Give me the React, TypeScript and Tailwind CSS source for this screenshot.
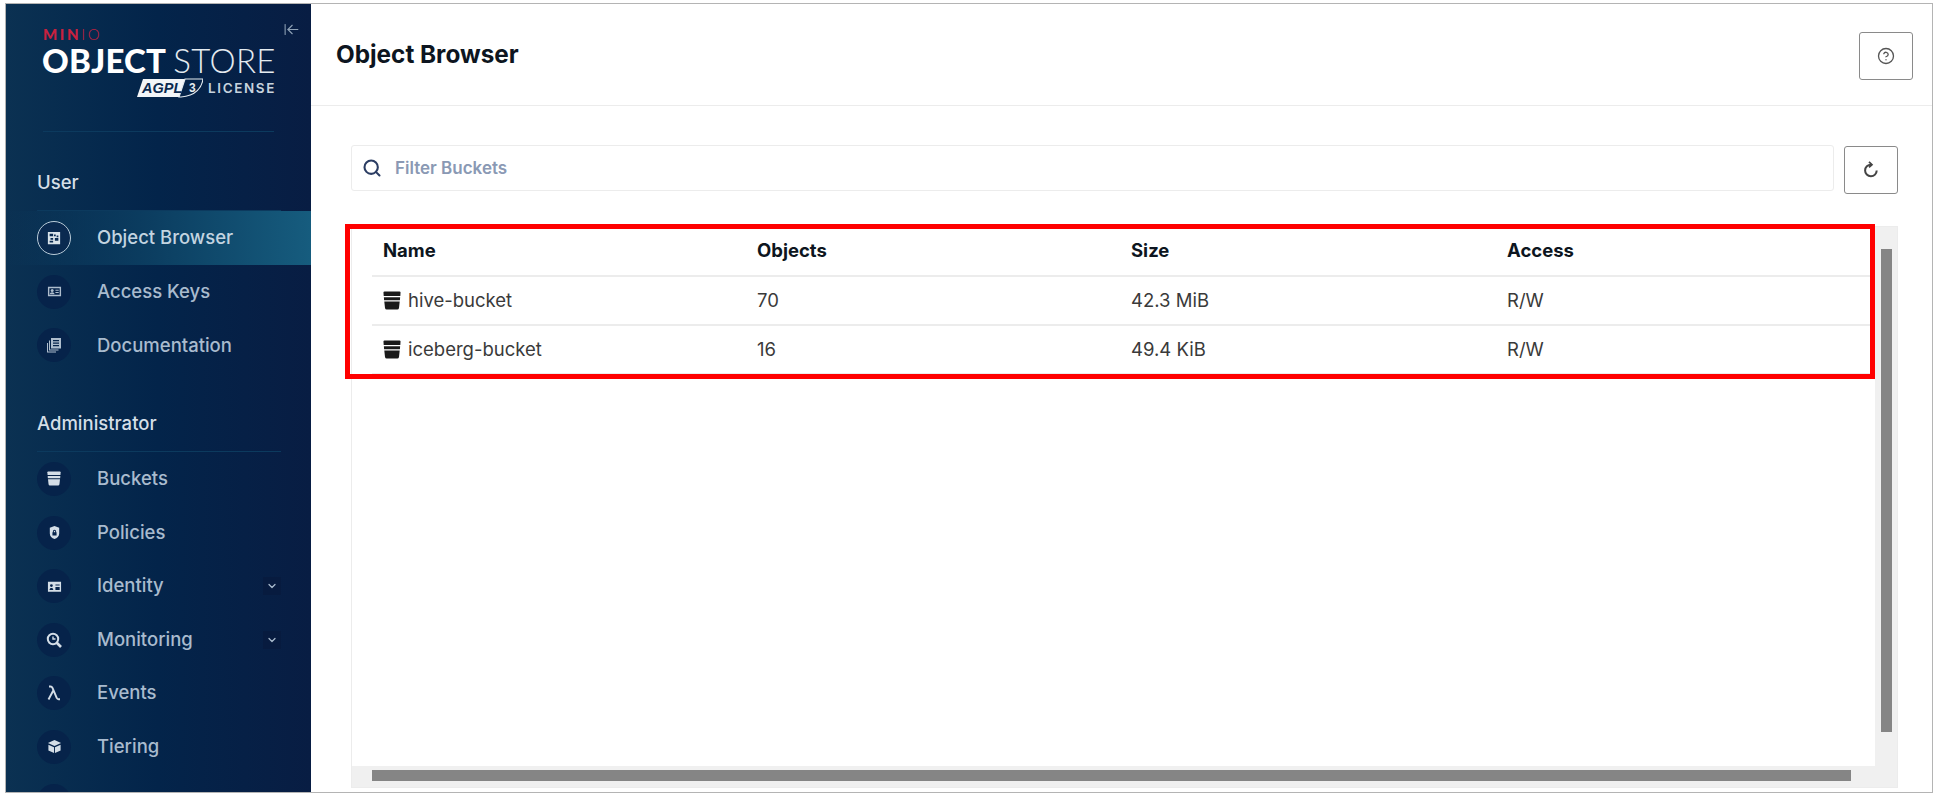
import React from "react";
import { ArrowLeftToLine, ChevronDown, CircleHelp, Search } from "lucide-react";

function BucketIcon({ className }: { className: string }) {
  return (
    <svg viewBox="0 0 18 19" className={className} fill="currentColor">
      <path d="M1.500 0.500h15A1 1 0 0 1 17.500 1.500L17.300 5H.700L.500 1.500A1 1 0 0 1 1.500 0.500z" />
      <path d="M.900 6.200h16.200L16.900 9.200H1.100z" />
      <path d="M1.300 10.400h15.400L16 17a1.800 1.800 0 0 1-1.800 1.500H3.800A1.800 1.800 0 0 1 2 17z" />
    </svg>
  );
}

function BrowserIcon() {
  return (
    <svg viewBox="0 0 16 16" className="h-[14px] w-[14px] text-[#d9e3ea]" fill="currentColor">
      <path d="M1 1h14v14H1zM3 3v3h4V3zm5 1v2h2V4zm3 1v2h2V5zM4 8v2h3V8zm5 0v3h4V8zm-6 3v2h4v-2z" fillRule="evenodd" />
    </svg>
  );
}

function KeysIcon() {
  return (
    <svg viewBox="0 0 16 16" className="h-[15px] w-[15px] text-[#aebdcd]" fill="currentColor">
      <path d="M1 3h14v10H1zM2.500 4.500v7h11v-7z" fillRule="evenodd" />
      <circle cx="5.500" cy="7" r="1.600" />
      <path d="M3 11c0-1.600 1-2.300 2.500-2.300S8 9.400 8 11zM9 6h3.500v1.200H9zM9 8.500h3.500v1.200H9z" />
    </svg>
  );
}

function DocsIcon() {
  return (
    <svg viewBox="0 0 16 16" className="h-[16px] w-[16px] text-[#aebdcd]" fill="currentColor">
      <path d="M5 1h10v10.500H5zM7 3v1.200h6V3zm0 2.500v1.200h6V5.500zM7 8v1.200h6V8z" fillRule="evenodd" />
      <path d="M3 3.500h1v9h8.500v1H3z" />
      <path d="M1 6h1v8.500h8v1H1z" />
    </svg>
  );
}

function PolicyIcon() {
  return (
    <svg viewBox="0 0 16 16" className="h-[15px] w-[15px] text-[#d4dee7]" fill="currentColor">
      <path d="M8 1l5 2v6c0 3-2.200 5-5 6-2.800-1-5-3-5-6V3zM8 5a1.700 1.700 0 0 0-1.700 1.700v1H5.800v3.500h4.400V7.700h-.5v-1A1.700 1.700 0 0 0 8 5zm0 1c.4 0 .7.300.7.700v1H7.300v-1c0-.4.300-.7.700-.7z" fillRule="evenodd" />
    </svg>
  );
}

function IdentityIcon() {
  return (
    <svg viewBox="0 0 16 16" className="h-[15px] w-[15px] text-[#d4dee7]" fill="currentColor">
      <path d="M1 3h14v10.500H1zM4.700 5.500a1.500 1.500 0 1 0 0 3 1.500 1.500 0 0 0 0-3zM2.700 11.700h4c0-1.500-.8-2.200-2-2.200s-2 .7-2 2.200zM9 5.800v1.200h4.500V5.800zM9 8.500v3.200h4.500V8.500z" fillRule="evenodd" />
    </svg>
  );
}

function MonitorIcon() {
  return (
    <svg viewBox="0 0 16 16" className="h-[16px] w-[16px] text-[#d4dee7]" fill="none" stroke="currentColor">
      <circle cx="7" cy="7" r="5.200" strokeWidth="2" />
      <path d="M10.500 10.500L15 15" strokeWidth="2.600" />
      <path d="M7 4.500V7h2.500" strokeWidth="1.400" />
    </svg>
  );
}

function LambdaIcon() {
  return (
    <svg viewBox="0 0 16 16" className="h-[16px] w-[16px] text-[#d4dee7]" fill="none" stroke="currentColor" strokeWidth="1.900">
      <path d="M3 1.500h1.500c1 0 1.600.5 2 1.500l4.300 10c.3.800.8 1.200 1.700 1.200H14M7.300 5.500L2.500 14.500" />
    </svg>
  );
}

function TierIcon() {
  return (
    <svg viewBox="0 0 16 16" className="h-[15px] w-[15px] text-[#d4dee7]" fill="currentColor">
      <path d="M8 1l7 3.200L8 7.400 1 4.200z" />
      <path d="M1.500 6l6 2.800V15l-6-2.800zM14.500 6l-6 2.800V15l6-2.800z" />
    </svg>
  );
}

function RefreshIcon() {
  return (
    <svg viewBox="0 0 18 18" className="h-[18px] w-[18px] text-[#444]" fill="none" stroke="currentColor" strokeWidth="2">
      <path d="M14.700 9.500A5.800 5.800 0 1 1 9 3.700" />
      <path d="M7 .8L10 3.700 7 6.400" strokeWidth="1.700" />
    </svg>
  );
}

function SideItem({
  label,
  icon,
  active,
  expandable,
}: {
  label?: string;
  icon: React.ReactNode;
  active?: boolean;
  expandable?: boolean;
}) {
  return (
    <div
      className={
        active
          ? "flex h-[54px] items-center bg-gradient-to-r from-transparent via-[#0c3f62] to-[#165c7e] pl-[31px] pr-[30px]"
          : "flex h-[53.6px] items-center pl-[31px] pr-[30px]"
      }
    >
      <div
        className={
          active
            ? "flex h-[34px] w-[34px] shrink-0 items-center justify-center rounded-full border-[1.5px] border-[#b9ccd9] bg-[#0a2a50]"
            : "flex h-[34px] w-[34px] shrink-0 items-center justify-center rounded-full bg-[#06234a]"
        }
      >
        {icon}
      </div>
      <span
        className={
          active
            ? "ml-[26px] flex-1 text-[18.500px] font-medium text-[#c3d4e0]"
            : "ml-[26px] flex-1 text-[18.500px] font-medium text-[#a9bbce]"
        }
      >
        {label}
      </span>
      {expandable && (
        <div className="flex h-[18px] w-[18px] items-center justify-center bg-[#071b3f]">
          <ChevronDown className="h-[12px] w-[12px] text-[#a9bbce]" strokeWidth={2.5} />
        </div>
      )}
    </div>
  );
}

function SideLabel({ text, first }: { text: string; first?: boolean }) {
  return (
    <div
      className={
        first
          ? "ml-[31px] mr-[30px] mt-[37px] border-b border-[#0c3a5e] pb-[13px]"
          : "ml-[31px] mr-[30px] mt-[38px] border-b border-[#0c3a5e] pb-[13px]"
      }
    >
      <div className="flex h-[28px] items-center text-[18.500px] font-medium text-[#d5dfe7]">{text}</div>
    </div>
  );
}

function Logo() {
  return (
    <div className="relative mx-[37px] h-[128px] border-b border-[#0c3a5e] pt-[22px]">
      <div className="flex h-[16px] items-center font-['Lato',sans-serif] text-[15px] leading-none tracking-[2.600px]">
        <span className="font-black text-[#c8213f]">MIN</span>
        <span className="font-light text-[#c8213f]">IO</span>
      </div>
      <div className="ml-[-1px] mt-[2px] flex h-[32px] items-center whitespace-nowrap font-['Lato',sans-serif] text-[33px] leading-none text-white">
        <span className="font-black tracking-[0.2px]">OBJECT</span>
        <span className="ml-[7px] font-light tracking-[0.4px] text-[#e4ebf0]">STORE</span>
      </div>
      <div className="mr-[-2px] mt-[2px] flex h-[20px] items-center justify-end">
        <svg viewBox="0 0 66 20" className="h-[20px] w-[66px]">
          <path d="M6 1h42l-6 18H0z" fill="#f2f5f8" />
          <path d="M48 1h18c-1 8-7 17-22 18h-2z" fill="none" stroke="#e4ebf0" strokeWidth="1.200" />
          <text x="5" y="14.500" fontSize="14.500" fontWeight="900" fontStyle="italic" fontFamily="Liberation Sans, sans-serif" fill="#0b2a50">AGPL</text>
          <text x="52" y="14" fontSize="12" fontWeight="700" fontFamily="Liberation Sans, sans-serif" fill="#e4ebf0">3</text>
        </svg>
        <span className="ml-[5px] text-[13.500px] font-semibold tracking-[1.600px] text-[#c7d3de]">LICENSE</span>
      </div>
      <ArrowLeftToLine className="absolute right-[-26px] top-[17px] h-[17px] w-[17px] text-[#8fa2b6]" strokeWidth={1.5} />
    </div>
  );
}

function Sidebar() {
  return (
    <aside className="h-full w-[305px] shrink-0 overflow-hidden bg-gradient-to-r from-[#0b3152] via-[#03244a] to-[#081d43]">
      <Logo />
      <SideLabel text="User" first />
      <SideItem label="Object Browser" icon={<BrowserIcon />} active />
      <SideItem label="Access Keys" icon={<KeysIcon />} />
      <SideItem label="Documentation" icon={<DocsIcon />} />
      <SideLabel text="Administrator" />
      <SideItem label="Buckets" icon={<BucketIcon className="h-[15px] w-[14px] text-[#d4dee7]" />} />
      <SideItem label="Policies" icon={<PolicyIcon />} />
      <SideItem label="Identity" icon={<IdentityIcon />} expandable />
      <SideItem label="Monitoring" icon={<MonitorIcon />} expandable />
      <SideItem label="Events" icon={<LambdaIcon />} />
      <SideItem label="Tiering" icon={<TierIcon />} />
      <SideItem icon={<TierIcon />} />
    </aside>
  );
}

const rows = [
  { name: "hive-bucket", objects: "70", size: "42.3 MiB", access: "R/W" },
  { name: "iceberg-bucket", objects: "16", size: "49.4 KiB", access: "R/W" },
];

function BucketTable() {
  return (
    <div className="relative mt-[32px] flex h-[562px] w-[1547px] flex-col border border-[#ececec]">
      <div className="flex min-h-0 flex-1">
        <div className="flex-1 pl-[20px]">
          <div className="grid h-[50px] grid-cols-[374px_374px_376px_1fr] items-center border-b-2 border-[#ececec] pl-[11px] text-[18.500px] font-bold text-[#0d1520]">
            <span>Name</span>
            <span>Objects</span>
            <span>Size</span>
            <span>Access</span>
          </div>
          {rows.map((r) => (
            <div
              key={r.name}
              className="grid h-[49px] grid-cols-[374px_374px_376px_1fr] items-center border-b-2 border-[#ececec] pl-[11px] text-[18.500px] text-[#3a3a3a]"
            >
              <span className="flex items-center">
                <BucketIcon className="mb-[1px] mr-[7px] h-[19px] w-[18px] text-[#1a1a1a]" />
                {r.name}
              </span>
              <span>{r.objects}</span>
              <span>{r.size}</span>
              <span>{r.access}</span>
            </div>
          ))}
        </div>
        <div className="w-[22px] shrink-0 bg-[#f0f0f0] pl-[6px] pt-[22px]">
          <div className="h-[483px] w-[11px] bg-[#858585]" />
        </div>
      </div>
      <div className="h-[21px] shrink-0 bg-[#f0f0f0] pl-[20px] pt-[4px]">
        <div className="h-[11px] w-[1479px] bg-[#858585]" />
      </div>
      <div className="absolute left-[-7px] top-[-3px] h-[155px] w-[1530px] border-[5px] border-[#ff0000]" />
    </div>
  );
}

function Main() {
  return (
    <main className="min-w-0 flex-1">
      <header className="flex h-[102px] items-center justify-between border-b border-[#ececec] pl-[25px] pr-[19px]">
        <h1 className="text-[24.300px] font-bold text-[#0d1520]">Object Browser</h1>
        <button className="mt-[2px] flex h-[48px] w-[54px] items-center justify-center rounded-[3px] border-[1.500px] border-[#8a8a8a] bg-white">
          <CircleHelp className="h-[18px] w-[18px] text-[#555]" strokeWidth={1.75} />
        </button>
      </header>
      <div className="pl-[40px] pt-[39px]">
        <div className="flex items-start">
          <div className="flex h-[46px] w-[1483px] items-center rounded-[3px] border border-[#ececec] pl-[10px]">
            <Search className="h-[20px] w-[20px] shrink-0 text-[#2b3d63]" strokeWidth={2.5} />
            <input
              placeholder="Filter Buckets"
              className="ml-[13px] flex-1 bg-transparent pt-[2px] text-[17px] font-semibold outline-none placeholder:text-[#8a99b4]"
            />
          </div>
          <button className="ml-[10px] mt-[1px] flex h-[48px] w-[54px] items-center justify-center rounded-[3px] border-[1.500px] border-[#8a8a8a] bg-white">
            <RefreshIcon />
          </button>
        </div>
        <BucketTable />
      </div>
    </main>
  );
}

export default function App() {
  return (
    <div className="h-[802px] w-[1944px] overflow-hidden bg-white pl-[5px] pt-[3px] font-['Inter',sans-serif]">
      <div className="flex h-[790px] w-[1928px] border border-[#b4b4b4]">
        <Sidebar />
        <Main />
      </div>
    </div>
  );
}
